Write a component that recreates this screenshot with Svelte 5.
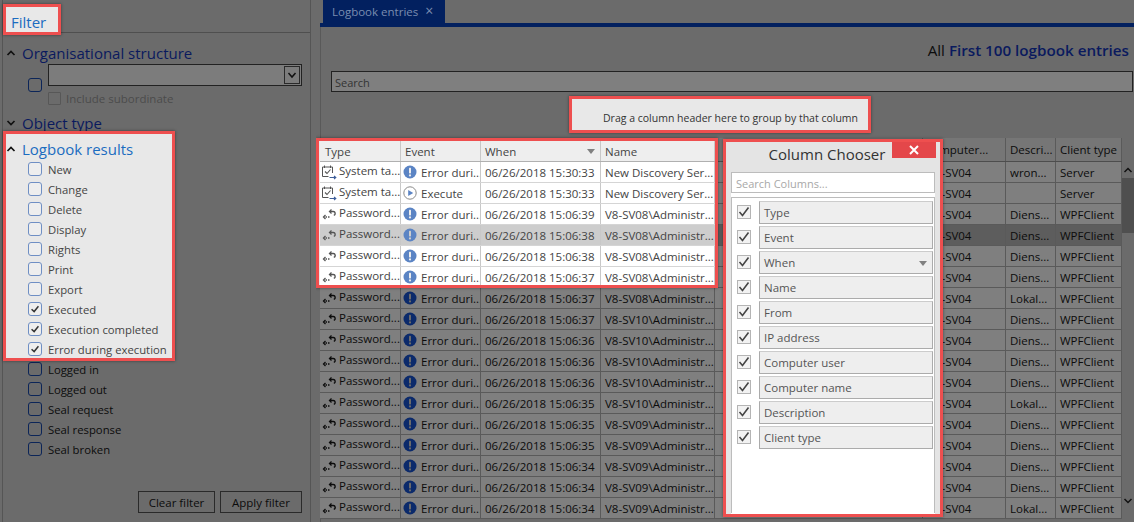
<script>
  const results = [
    { label: 'New', on: false },
    { label: 'Change', on: false },
    { label: 'Delete', on: false },
    { label: 'Display', on: false },
    { label: 'Rights', on: false },
    { label: 'Print', on: false },
    { label: 'Export', on: false },
    { label: 'Executed', on: true },
    { label: 'Execution completed', on: true },
    { label: 'Error during execution', on: true }
  ];
  const others = ['Logged in', 'Logged out', 'Seal request', 'Seal response', 'Seal broken'];

  const rows = [
    ['task', 'System ta...', 'err', 'Error duri...', '15:30:33', 'New Discovery Ser...', 'wron...', 'Server'],
    ['task', 'System ta...', 'run', 'Execute', '15:30:33', 'New Discovery Ser...', '', 'Server'],
    ['pw', 'Password...', 'err', 'Error duri...', '15:06:39', 'V8-SV08\\Administr...', 'Diens...', 'WPFClient'],
    ['pw', 'Password...', 'err', 'Error duri...', '15:06:38', 'V8-SV08\\Administr...', 'Diens...', 'WPFClient'],
    ['pw', 'Password...', 'err', 'Error duri...', '15:06:38', 'V8-SV08\\Administr...', 'Diens...', 'WPFClient'],
    ['pw', 'Password...', 'err', 'Error duri...', '15:06:37', 'V8-SV08\\Administr...', 'Diens...', 'WPFClient'],
    ['pw', 'Password...', 'err', 'Error duri...', '15:06:37', 'V8-SV08\\Administr...', 'Lokal...', 'WPFClient'],
    ['pw', 'Password...', 'err', 'Error duri...', '15:06:37', 'V8-SV10\\Administr...', 'Diens...', 'WPFClient'],
    ['pw', 'Password...', 'err', 'Error duri...', '15:06:36', 'V8-SV10\\Administr...', 'Diens...', 'WPFClient'],
    ['pw', 'Password...', 'err', 'Error duri...', '15:06:36', 'V8-SV10\\Administr...', 'Diens...', 'WPFClient'],
    ['pw', 'Password...', 'err', 'Error duri...', '15:06:36', 'V8-SV10\\Administr...', 'Diens...', 'WPFClient'],
    ['pw', 'Password...', 'err', 'Error duri...', '15:06:35', 'V8-SV10\\Administr...', 'Lokal...', 'WPFClient'],
    ['pw', 'Password...', 'err', 'Error duri...', '15:06:35', 'V8-SV09\\Administr...', 'Diens...', 'WPFClient'],
    ['pw', 'Password...', 'err', 'Error duri...', '15:06:35', 'V8-SV09\\Administr...', 'Diens...', 'WPFClient'],
    ['pw', 'Password...', 'err', 'Error duri...', '15:06:34', 'V8-SV09\\Administr...', 'Diens...', 'WPFClient'],
    ['pw', 'Password...', 'err', 'Error duri...', '15:06:34', 'V8-SV09\\Administr...', 'Diens...', 'WPFClient'],
    ['pw', 'Password...', 'err', 'Error duri...', '15:06:34', 'V8-SV09\\Administr...', 'Lokal...', 'WPFClient']
  ];

  const columns = ['Type', 'Event', 'When', 'Name', 'From', 'IP address', 'Computer user', 'Computer name', 'Description', 'Client type'];
  const selected = 3;
</script>

{#snippet check(on)}
  <span class="check">
    {#if on}
      <svg viewBox="0 0 14 14" width="14" height="14"><path d="M2.5 7 5.5 10.5 11.5 2.5" fill="none" stroke="currentColor" stroke-width="1.6" /></svg>
    {/if}
  </span>
{/snippet}

{#snippet chevron(up)}
  <svg class="chev" viewBox="0 0 10 8" width="10" height="8">
    <path d={up ? 'M1.5 6 5 2.5 8.5 6' : 'M1.5 2 5 5.5 8.5 2'} fill="none" stroke="currentColor" stroke-width="1.7" />
  </svg>
{/snippet}

{#snippet leftRow(r, i)}
  <div class="row" class:sel={i === selected}>
    <div class="cell c-type">
      {#if r[0] === 'task'}
        <svg class="ico" viewBox="0 0 16 16" width="16" height="16">
          <path d="M1.5 3h10v6M1.5 3v9.5h6" fill="none" stroke="currentColor" stroke-width="1" />
          <path d="M3.5 1.5v2.5M9.5 1.5v2.5" stroke="currentColor" stroke-width="1" />
          <path d="M4 7.5l2 2 3.5-4" fill="none" stroke="currentColor" stroke-width="1.1" />
          <path d="M8.5 13.5h6M13 12l1.8 1.5L13 15" fill="none" stroke="#3f5f9a" stroke-width="1.1" />
        </svg>
      {:else}
        <svg class="ico" viewBox="0 0 16 16" width="16" height="16">
          <path d="M9 5.5h3.2a2 2 0 0 1 .6 3.9" fill="none" stroke="currentColor" stroke-width="1.4" />
          <path d="M10.5 3.5 8.5 5.5l2 2" fill="none" stroke="currentColor" stroke-width="1.3" />
          <path d="M8.5 11H3.5" fill="none" stroke="currentColor" stroke-width="1.4" stroke-dasharray="1.5 1" />
          <path d="M4.5 9 2.5 11l2 2" fill="none" stroke="currentColor" stroke-width="1.3" />
        </svg>
      {/if}
      <span class="type-text">{r[1]}</span>
    </div>
    <div class="cell c-event">
      {#if r[2] === 'err'}
        <svg class="ico blue" viewBox="0 0 14 14" width="14" height="14">
          <circle cx="7" cy="7" r="6.5" fill="currentColor" />
          <rect x="6" y="2.8" width="2" height="5.6" rx="0.6" fill="var(--mark)" />
          <circle cx="7" cy="10.4" r="1.1" fill="var(--mark)" />
        </svg>
      {:else}
        <svg class="ico blue" viewBox="0 0 14 14" width="14" height="14">
          <circle cx="7" cy="7" r="6.2" fill="none" stroke="#8a8a8a" stroke-width="1" />
          <path d="M5.2 3.9v6.2L10.2 7z" fill="currentColor" />
        </svg>
      {/if}
      <span>{r[3]}</span>
    </div>
    <div class="cell c-when">{r[4] ? '06/26/2018 ' + r[4] : ''}</div>
    <div class="cell c-name">{r[5]}</div>
  </div>
{/snippet}

<div class="screen">
  <aside class="filter">
    <div class="filter-head">
      <h1 class="spot filter-title">Filter</h1>
    </div>

    <div class="filter-body">
      <h2 class="group org-title">{@render chevron(true)}Organisational structure</h2>
      <div class="org">
        <span class="box dim-box"></span>
        <div class="org-fields">
          <div class="combo">
            <span class="combo-btn">
              <svg viewBox="0 0 10 8" width="10" height="8"><path d="M1.5 2 5 6l3.5-4" fill="none" stroke="#111" stroke-width="1.5" /></svg>
            </span>
          </div>
          <div class="subordinate"><span class="box off-box"></span>Include subordinate</div>
        </div>
      </div>

      <h2 class="group object">{@render chevron(false)}Object type</h2>

      <div class="spot results">
        <h2 class="group lit">{@render chevron(true)}Logbook results</h2>
        <ul class="checks">
          {#each results as item}
            <li><span class="box lit-box">{#if item.on}<svg viewBox="0 0 14 14" width="12" height="12"><path d="M3 7.2 6 10l5-6.2" fill="none" stroke="#333" stroke-width="1.7" /></svg>{/if}</span>{item.label}</li>
          {/each}
        </ul>
      </div>

      <ul class="checks others">
        {#each others as label}
          <li><span class="box dim-box"></span>{label}</li>
        {/each}
      </ul>

      <div class="buttons">
        <button class="clear">Clear filter</button>
        <button class="apply">Apply filter</button>
      </div>
    </div>
  </aside>

  <main class="content">
    <div class="tabs">
      <div class="tab">Logbook entries <span class="tab-x">×</span></div>
    </div>

    <div class="panel">
      <div class="summary">All <b>First 100 logbook entries</b></div>
      <div class="search">Search</div>
      <div class="spot drop">Drag a column header here to group by that column</div>

      <div class="grid">
        <div class="pane-left">
          <div class="spot grid-spot">
            <div class="row head">
              <div class="cell c-type">Type</div>
              <div class="cell c-event">Event</div>
              <div class="cell c-when">When<span class="sort"></span></div>
              <div class="cell c-name">Name</div>
            </div>
            {#each rows.slice(0, 6) as r, i}
              {@render leftRow(r, i)}
            {/each}
          </div>
          <div class="dim-rows">
            {#each rows.slice(6) as r, i}
              {@render leftRow(r, i + 6)}
            {/each}
          </div>
        </div>

        <div class="pane-right">
          <div class="row head">
            <div class="cell c-hidden"></div>
            <div class="cell c-comp">Computer...</div>
            <div class="cell c-desc">Descri...</div>
            <div class="cell c-client">Client type</div>
          </div>
          {#each rows as r, i}
            <div class="row" class:sel={i === selected}>
              <div class="cell c-hidden"></div>
              <div class="cell c-comp">{r[7] ? 'V8-SV04' : ''}</div>
              <div class="cell c-desc">{r[6]}</div>
              <div class="cell c-client">{r[7]}</div>
            </div>
          {/each}

          <section class="chooser">
            <div class="chooser-head">
              Column Chooser
              <span class="chooser-x">
                <svg viewBox="0 0 10 10" width="10" height="10"><path d="M1 1l8 8M9 1 1 9" stroke="#fff" stroke-width="2" /></svg>
              </span>
            </div>
            <div class="chooser-body">
              <div class="chooser-search">Search Columns...</div>
              <div class="chooser-list">
                {#each columns as name}
                  <div class="chooser-item">
                    {@render check(true)}
                    <div class="chip">
                      {name}
                      {#if name === 'When'}<span class="sort"></span>{/if}
                    </div>
                  </div>
                {/each}
              </div>
            </div>
          </section>
        </div>

        <div class="scrollbar">
          <svg viewBox="0 0 10 8" width="10" height="8"><path d="M1.5 6 5 2.5 8.5 6" fill="none" stroke="#111" stroke-width="1.5" /></svg>
          <span class="thumb"></span>
          <svg class="down" viewBox="0 0 10 8" width="10" height="8"><path d="M1.5 2 5 5.5 8.5 2" fill="none" stroke="#111" stroke-width="1.5" /></svg>
        </div>
      </div>
    </div>
  </main>
</div>

<style>
  :global(body) {
    margin: 0;
    background: #6b6b6b;
  }

  .screen {
    width: 1134px;
    height: 522px;
    overflow: hidden;
    display: grid;
    grid-template-columns: 311px 1fr;
    background: #6b6b6b;
    color: #0c0c0c;
    font-family: "Open Sans", "Noto Sans", sans-serif;
    font-size: 11.5px;
    --mark: #6b6b6b;
  }

  h1, h2, ul {
    margin: 0;
    padding: 0;
    font-weight: 400;
    list-style: none;
  }

  .spot {
    background: #e8e8e8;
    border: 3px solid #ee4f4f;
    box-shadow: 0 0 3px rgba(0, 0, 0, 0.45);
    color: #444;
    --mark: #eeeeee;
  }

  /* left filter column */
  .filter {
    border-left: 1px solid #555;
    border-right: 1px solid #555;
    margin-left: 2px;
    box-sizing: border-box;
    display: flex;
    flex-direction: column;
    min-width: 0;
    height: 522px;
  }

  .filter-head {
    height: 32px;
    border-bottom: 1px solid #4f4f4f;
    flex: none;
  }

  .filter-title {
    box-sizing: border-box;
    width: 58px;
    height: 31px;
    margin: 4px 0 0 0;
    padding: 5px 0 0 5px;
    color: #1b6cc0;
    font-size: 15px;
    font-weight: 500;
    line-height: 20px;
    position: relative;
  }

  .filter-body {
    position: relative;
    display: flex;
    flex-direction: column;
    flex: 1;
    min-height: 0;
  }

  .group {
    display: flex;
    align-items: center;
    height: 22px;
    padding-left: 3px;
    gap: 6px;
    font-size: 15px;
    color: #0a1a5e;
    white-space: nowrap;
  }

  .org-title {
    margin-top: 9px;
  }

  .chev {
    color: #111;
    flex: none;
  }

  .org {
    display: flex;
    padding-left: 25px;
  }

  .box {
    box-sizing: border-box;
    flex: none;
    width: 14px;
    height: 14px;
    border-radius: 3px;
    display: inline-flex;
    align-items: center;
    justify-content: center;
  }

  .dim-box {
    border: 1.5px solid #0c2558;
  }

  .lit-box {
    border: 1.5px solid #6f8fc4;
    background: #eeeeee;
  }

  .off-box {
    border: 1px solid #575757;
    border-radius: 1px;
    width: 13px;
    height: 13px;
  }

  .org > .box {
    margin-top: 14px;
    margin-right: 6px;
  }

  .org-fields {
    display: flex;
    flex-direction: column;
  }

  .combo {
    box-sizing: border-box;
    width: 254px;
    height: 22px;
    background: #7c7c7c;
    border: 1px solid #222;
    display: flex;
    justify-content: flex-end;
    padding: 1px;
  }

  .combo-btn {
    box-sizing: border-box;
    width: 16px;
    border: 1px solid #2a2a2a;
    display: flex;
    align-items: center;
    justify-content: center;
  }

  .subordinate {
    display: flex;
    align-items: center;
    gap: 5px;
    margin-top: 5px;
    color: #4b4b4b;
    height: 14px;
  }

  .object {
    margin-top: 7px;
  }

  .results {
    box-sizing: border-box;
    width: 172px;
    height: 230px;
    margin-top: -3px;
    padding-top: 5px;
    position: relative;
  }

  .results .group {
    height: 20px;
    padding-left: 0;
  }

  .lit {
    color: #1b6cc0;
  }

  .checks li {
    display: flex;
    align-items: center;
    height: 20px;
    gap: 6px;
    padding-left: 22px;
    white-space: nowrap;
    font-size: 11.3px;
  }

  .others {
    margin-top: -2px;
    padding-left: 3px;
  }

  .buttons {
    margin-top: auto;
    display: flex;
    justify-content: flex-end;
    gap: 5px;
    padding: 0 8px 9px 0;
  }

  button {
    box-sizing: border-box;
    height: 22px;
    background: transparent;
    border: 1px solid #2a2a2a;
    color: #0c0c0c;
    font: inherit;
    padding: 0;
  }

  .clear { width: 77px; }
  .apply { width: 82px; }

  /* right content column */
  .content {
    min-width: 0;
    display: flex;
    flex-direction: column;
    height: 522px;
  }

  .tabs {
    height: 23px;
    border-bottom: 4px solid #02205f;
    margin-left: 9px;
    padding-left: 3px;
    flex: none;
  }

  .tab {
    width: 122px;
    height: 23px;
    box-sizing: border-box;
    background: #02205f;
    color: #7a8db0;
    font-size: 11.5px;
    line-height: 22px;
    padding-left: 9px;
    white-space: nowrap;
  }

  .tab-x {
    font-size: 14px;
    margin-left: 4px;
  }

  .panel {
    margin-left: 9px;
    border-left: 1px solid #595959;
    padding-left: 10px;
    display: flex;
    flex-direction: column;
    flex: 1;
    min-height: 0;
  }

  .summary {
    height: 44px;
    line-height: 46px;
    text-align: right;
    font-size: 15.2px;
    padding-right: 5px;
    color: #0c0c0c;
    white-space: nowrap;
  }

  .summary b {
    color: #0a1a5e;
    font-weight: 600;
  }

  .search {
    box-sizing: border-box;
    height: 21px;
    background: #7f7f7f;
    border: 1px solid #222;
    line-height: 21px;
    padding-left: 3px;
    color: #333;
    font-size: 11px;
    margin-right: 1px;
  }

  .drop {
    box-sizing: border-box;
    width: 302px;
    height: 37px;
    margin: 4px 0 0 238px;
    padding: 12px 0 0 31px;
    font-size: 10.5px;
    line-height: 14px;
    color: #333;
    white-space: nowrap;
    flex: none;
  }

  /* table */
  .grid {
    display: flex;
    margin: 5px 0 0 -15px;
    flex: 1;
    min-height: 0;
    align-items: flex-start;
    overflow: hidden;
    padding: 4px 0 0 5px;
    margin-top: 1px;
  }

  .pane-left {
    width: 402px;
    flex: none;
    margin-left: -5px;
  }

  .grid-spot {
    box-sizing: border-box;
    height: 150px;
    overflow: hidden;
    padding-left: 1px;
    position: relative;
    z-index: 1;
  }

  .dim-rows {
    padding-left: 4px;
  }

  .pane-right {
    width: 404px;
    flex: none;
    position: relative;
    height: 522px;
  }

  .row {
    display: flex;
    height: 21px;
    box-sizing: border-box;
    background: #7f7f7f;
    border-bottom: 1px solid #5a5a5a;
  }

  .row.sel {
    background: #5d5d5d;
  }

  .row.head {
    height: 24px;
    background: #767676;
    border-bottom: 1px solid #4d4d4d;
  }

  .grid-spot .row.head {
    height: 21px;
  }

  .cell {
    box-sizing: border-box;
    display: flex;
    align-items: center;
    border-right: 1px solid #5a5a5a;
    padding-left: 3px;
    overflow: hidden;
    white-space: nowrap;
    flex: none;
    position: relative;
  }

  .c-type { width: 81px; padding-left: 1px; gap: 2px; }
  .c-event { width: 80px; padding-left: 2px; gap: 4px; }
  .c-when { width: 120px; padding-left: 4px; }
  .c-name { width: 114px; padding-left: 4px; }
  .c-hidden { width: 205px; }
  .c-comp { width: 83px; padding-left: 5px; }
  .c-desc { width: 50px; padding-left: 4px; }
  .c-client { width: 66px; padding-left: 4px; }

  .head .c-comp { padding-left: 2px; }
  .head .c-type { padding-left: 5px; }
  .head .c-event { padding-left: 4px; }

  .type-text {
    position: relative;
    top: -2px;
  }

  .ico {
    flex: none;
    color: #0c0c0c;
  }

  .ico.blue {
    color: #0b2a6b;
  }

  .sort {
    position: absolute;
    right: 5px;
    top: 8px;
    border-left: 4.5px solid transparent;
    border-right: 4.5px solid transparent;
    border-top: 5px solid #808080;
  }

  .grid-spot .row {
    background: #fff;
    border-bottom-color: #d5d5d5;
  }

  .grid-spot .row.sel {
    background: #cdcdcd;
    --mark: #cdcdcd;
  }

  .grid-spot .row.head {
    background: #eeeeee;
    border-bottom-color: #b0b0b0;
  }

  .grid-spot .cell {
    border-right-color: #c8c8c8;
  }

  .grid-spot .ico {
    color: #555;
  }

  .grid-spot .ico.blue {
    color: #5b84c4;
  }

  /* column chooser popup */
  .chooser {
    position: absolute;
    left: 5px;
    top: 1px;
    width: 220px;
    height: 378px;
    box-sizing: border-box;
    border: 3px solid #ee4f4f;
    background: #e4e4e4;
    padding: 0 5px;
    color: #444;
    box-shadow: 0 0 3px rgba(0, 0, 0, 0.45);
  }

  .chooser-head {
    height: 30px;
    line-height: 24px;
    font-size: 15px;
    text-align: center;
    padding-right: 12px;
    position: relative;
    color: #333;
  }

  .chooser-x {
    position: absolute;
    right: -1px;
    top: 0;
    width: 44px;
    height: 16px;
    background: #e4474a;
    display: flex;
    align-items: center;
    justify-content: center;
  }

  .chooser-body {
    background: #fff;
    height: 342px;
  }

  .chooser-search {
    box-sizing: border-box;
    height: 21px;
    border: 1px solid #bcbcbc;
    background: #fff;
    color: #a8a8a8;
    font-size: 11px;
    line-height: 21px;
    padding-left: 4px;
  }

  .chooser-list {
    margin-top: 4px;
    border: 1px solid #bcbcbc;
    border-bottom: 0;
    background: #fff;
    padding-top: 3px;
    height: 316px;
    box-sizing: border-box;
  }

  .chooser-item {
    display: flex;
    height: 25px;
    align-items: flex-start;
  }

  .check {
    box-sizing: border-box;
    flex: none;
    width: 14px;
    height: 14px;
    margin: 4px 0 0 5px;
    border: 1px solid #b4b4b4;
    color: #444;
    display: flex;
    align-items: center;
    justify-content: center;
    background: #f2f2f2;
  }

  .check svg {
    flex: none;
  }

  .chip {
    box-sizing: border-box;
    position: relative;
    margin-left: 8px;
    width: 174px;
    height: 23px;
    border: 1px solid #ababab;
    border-top-color: #ccc;
    background: #eeeeee;
    padding-left: 4px;
    line-height: 22px;
    color: #555;
  }

  .chip .sort {
    top: 9px;
    right: 5px;
  }

  .scrollbar {
    width: 12px;
    flex: none;
    position: relative;
    padding-top: 28px;
    height: 367px;
    box-sizing: border-box;
    display: flex;
    flex-direction: column;
    align-items: center;
  }

  .thumb {
    width: 12px;
    height: 55px;
    background: #4f4f4f;
    margin-top: 4px;
  }

  .down {
    margin-top: auto;
  }
</style>
